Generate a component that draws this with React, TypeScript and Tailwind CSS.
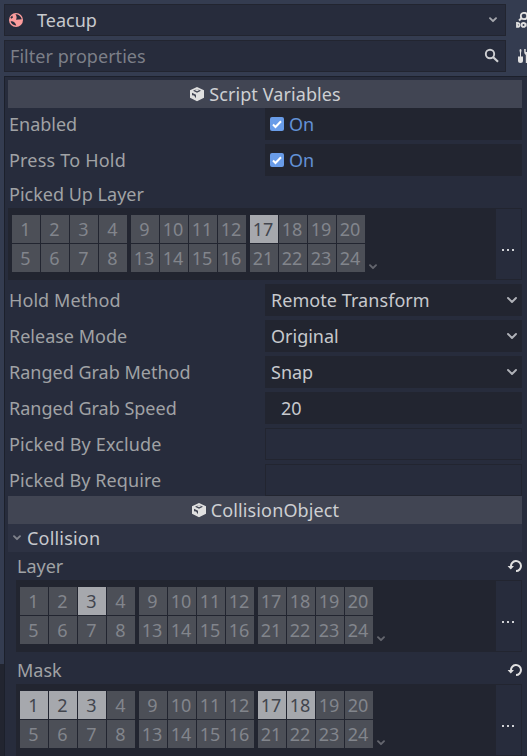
import type { ReactNode } from "react";

const LAYER_BLOCKS = [
  [1, 2, 3, 4, 5, 6, 7, 8],
  [9, 10, 11, 12, 13, 14, 15, 16],
  [17, 18, 19, 20, 21, 22, 23, 24],
];

function SmallChevron({ className = "" }: { className?: string }) {
  return (
    <svg width="8" height="6" viewBox="0 0 8 6" fill="none" className={className}>
      <path d="M1 1.2 4 4.2 7 1.2" stroke="currentColor" strokeWidth="1.9" strokeLinecap="round" strokeLinejoin="round" />
    </svg>
  );
}

function SelectChevron() {
  return (
    <svg width="12" height="8" viewBox="0 0 12 8" fill="none" className="text-[#b0b2b8]">
      <path d="M2 2 6 6 10 2" stroke="currentColor" strokeWidth="1.9" strokeLinecap="round" strokeLinejoin="round" />
    </svg>
  );
}

function CubeIcon() {
  return (
    <svg width="16" height="16" viewBox="0 0 16 16">
      <path d="M8 1 1 4.2V11.8L8 15.2 15 11.8V4.2Z" fill="#e0e0e0" />
      <path d="M8 3 4 4.800 8 6.800 12 4.800Z" fill="#414553" />
      <path d="M5.600 4.100 8 3 10.400 4.100 8 5.300Z" fill="#e0e0e0" />
      <path d="M3 6.800V9.300L5 9.500 7 12.200V8.800Z" fill="#414553" />
    </svg>
  );
}

function BallIcon() {
  return (
    <svg width="16" height="16" viewBox="0 0 16 16">
      <circle cx="8" cy="8" r="7" fill="#fc9c9c" />
      <path d="M7.4 2.2C9.4 1.8 12.8 3.3 13.8 7.2L8 7.7C9 5.8 8.800 4 7.400 2.200Z" fill="#272c3c" />
      <path d="M2.400 5.500 4.200 3.400 5 5.600 3.200 6.800ZM2.600 9.600C4.500 8.800 7 9.800 8.300 13.400 5.500 13.600 3.300 12 2.600 9.600Z" fill="#272c3c" />
    </svg>
  );
}

function Header({ children, className }: { children: ReactNode; className: string }) {
  return (
    <div className="flex h-7 shrink-0 items-center justify-center gap-1 bg-[#414553] text-[#cdcfd2]">
      <CubeIcon />
      <span className={className}>{children}</span>
    </div>
  );
}

function Row({ label, className = "", children }: { label: string; className?: string; children?: ReactNode }) {
  return (
    <div className="flex h-8 shrink-0 items-center">
      <div className="w-[257px] shrink-0 pl-px text-[#a0a2a5]">
        <span className={className}>{label}</span>
      </div>
      {children}
    </div>
  );
}

function CheckField() {
  return (
    <div className="flex h-8 flex-1 items-center gap-[5px] bg-[#222530] pl-[5px] text-[#6391d6]">
      <svg width="14" height="14" viewBox="0 0 14 14">
        <rect width="14" height="14" rx="2" fill="#699ce8" />
        <path d="M3 7.500 5.500 10 11 4.300" stroke="#fff" strokeWidth="2" fill="none" />
      </svg>
      <span>On</span>
    </div>
  );
}

function SelectField({ value, className = "" }: { value: string; className?: string }) {
  return (
    <div className="flex h-8 flex-1 items-center justify-between bg-[#222530] pr-1 pl-1.5 text-[#c7c9cd]">
      <span className={className}>{value}</span>
      <SelectChevron />
    </div>
  );
}

function EmptyField() {
  return <div className="h-8 flex-1 border border-[#222530] bg-[#272c3c]" />;
}

function LayerGrid({ active }: { active: number[] }) {
  return (
    <div className="flex h-[72px] shrink-0 bg-[#222530]">
      <div className="flex gap-1 pt-[7px] pl-1">
        {LAYER_BLOCKS.map((block) => (
          <div key={block[0]} className="grid h-[57px] grid-cols-[repeat(4,28px)] grid-rows-[28px_28px] gap-px">
            {block.map((n) => (
              <div
                key={n}
                className={
                  active.includes(n)
                    ? "flex items-center justify-center bg-[#a6a8ad] text-[#42454d]"
                    : "flex items-center justify-center bg-[#4c4f57] text-[#82858c]"
                }
              >
                <span className={n < 10 ? "pr-px" : "pr-[2px]"}>{n}</span>
              </div>
            ))}
          </div>
        ))}
      </div>
      <SmallChevron className="mt-[56px] ml-1 text-[#64666e]" />
      <div className="my-px mr-px ml-auto flex w-[25px] items-center justify-center gap-[3px] bg-[#272c3c] pt-[11px] pr-px">
        <i className="size-[2px] bg-[#d0d2d6]" />
        <i className="size-[2px] bg-[#d0d2d6]" />
        <i className="size-[2px] bg-[#d0d2d6]" />
      </div>
    </div>
  );
}

function RevertIcon() {
  return (
    <svg width="15" height="16" viewBox="0 0 15 16" fill="none">
      <path d="M4 8.500A5 5 0 1 1 9 13" stroke="#e0e0e0" strokeWidth="2" />
      <path d="M.6 8H7L3.800 11.500Z" fill="#e0e0e0" />
    </svg>
  );
}

function LayerLabel({ children, revert }: { children: ReactNode; revert?: boolean }) {
  return (
    <div className="flex h-7 shrink-0 items-center justify-between pl-px text-[#a0a2a5]">
      <span>{children}</span>
      {revert && <RevertIcon />}
    </div>
  );
}

function DocIcon() {
  return (
    <svg width="16" height="16" viewBox="0 0 16 16" fill="none" stroke="#e0e0e0">
      <circle cx="10" cy="4" r="3.200" strokeWidth="1.800" />
      <path d="M7.500 6.300 5 8.600" strokeWidth="2" />
      <path d="M3 10.900Q5.600 10.900 5.600 12.900T3 14.900Z" strokeWidth="1.800" />
      <circle cx="9.500" cy="12.900" r="1.900" strokeWidth="1.800" />
      <path d="M16 11H15Q13.300 11 13.300 12.900T15 14.900H16" strokeWidth="1.800" />
    </svg>
  );
}

function ToolsIcon() {
  return (
    <svg width="16" height="16" viewBox="0 0 16 16" fill="#e0e0e0">
      <path d="M6.500 1Q7.500 1 7.500 2.500L7 5V8.500H9V12.500Q9 15 6.500 15T4 12.500V8.500H6V5L5.500 2.500Q5.500 1 6.500 1Z" />
      <path d="M10.200 1V4Q10.200 6 11.800 7V15H14.500V7Q16 6 16 4V1H14.500V4H11.700V1Z" />
    </svg>
  );
}

export default function App() {
  return (
    <div className="flex h-[756px] w-[527px] overflow-hidden bg-[#343c50] font-['Noto_Sans',sans-serif] text-[18px] leading-7 whitespace-nowrap">
      <div className="flex w-1 shrink-0 items-end">
        <div className="h-[92px] w-full bg-[#222530]" />
      </div>
      <main className="flex w-[523px] flex-col gap-1 pt-1">
        <div className="flex h-8 shrink-0 gap-2">
          <div className="flex w-[502px] shrink-0 items-center border border-[#222530] bg-[#272c3c] pr-[8px] pl-[3px] text-[#c7c9cd]">
            <BallIcon />
            <span className="ml-[13px] flex-1">Teacup</span>
            <SmallChevron className="text-[#a5a7ad]" />
          </div>
          <div className="flex shrink-0 items-center"><DocIcon /></div>
        </div>
        <div className="flex h-8 shrink-0 gap-2">
          <div className="flex w-[502px] shrink-0 items-center justify-between border border-[#222530] bg-[#272c3c] pr-[5px] pl-[5px] text-[#7c7f88]">
            <span className="tracking-[0.04px]">Filter properties</span>
            <svg width="16" height="16" viewBox="0 0 16 16" fill="none" stroke="#cfd0d3">
              <circle cx="6" cy="6" r="4.200" strokeWidth="1.900" />
              <path d="M9 9 14 13.800" strokeWidth="2.100" />
            </svg>
          </div>
          <div className="flex shrink-0 items-center"><ToolsIcon /></div>
        </div>
        <section className="flex flex-1 flex-col border-t border-l border-[#1c202b] bg-[#272c3c] pt-[3px] pr-[5px] pl-[3px]">
          <Header className="tracking-[0.1px]">Script Variables</Header>
          <div className="flex flex-col gap-1">
            <Row label="Enabled"><CheckField /></Row>
            <Row label="Press To Hold" className="tracking-[0.2px]"><CheckField /></Row>
            <div className="flex flex-col">
              <LayerLabel>Picked Up Layer</LayerLabel>
              <LayerGrid active={[17]} />
            </div>
            <Row label="Hold Method" className="tracking-[0.08px]"><SelectField value="Remote Transform" className="tracking-[0.06px]" /></Row>
            <Row label="Release Mode"><SelectField value="Original" /></Row>
            <Row label="Ranged Grab Method"><SelectField value="Snap" /></Row>
            <Row label="Ranged Grab Speed">
              <div className="flex h-8 flex-1 items-center bg-[#222530] pl-4 text-[#c7c9cd]">20</div>
            </Row>
            <Row label="Picked By Exclude" className="tracking-[0.15px]"><EmptyField /></Row>
            <Row label="Picked By Require" className="tracking-[0.1px]"><EmptyField /></Row>
          </div>
          <Header className="tracking-[0.13px]">CollisionObject</Header>
          <div className="flex h-7 shrink-0 items-center gap-[6px] bg-[#2d3243] pl-[5px] text-[#c7c9cd]">
            <SmallChevron className="text-[#80838c]" />
            <span className="tracking-[0.2px]">Collision</span>
          </div>
          <div className="flex flex-col gap-1 pl-2">
            <div>
              <LayerLabel revert>Layer</LayerLabel>
              <LayerGrid active={[3]} />
            </div>
            <div>
              <LayerLabel revert>Mask</LayerLabel>
              <LayerGrid active={[1, 2, 3, 17, 18]} />
            </div>
          </div>
        </section>
      </main>
    </div>
  );
}
